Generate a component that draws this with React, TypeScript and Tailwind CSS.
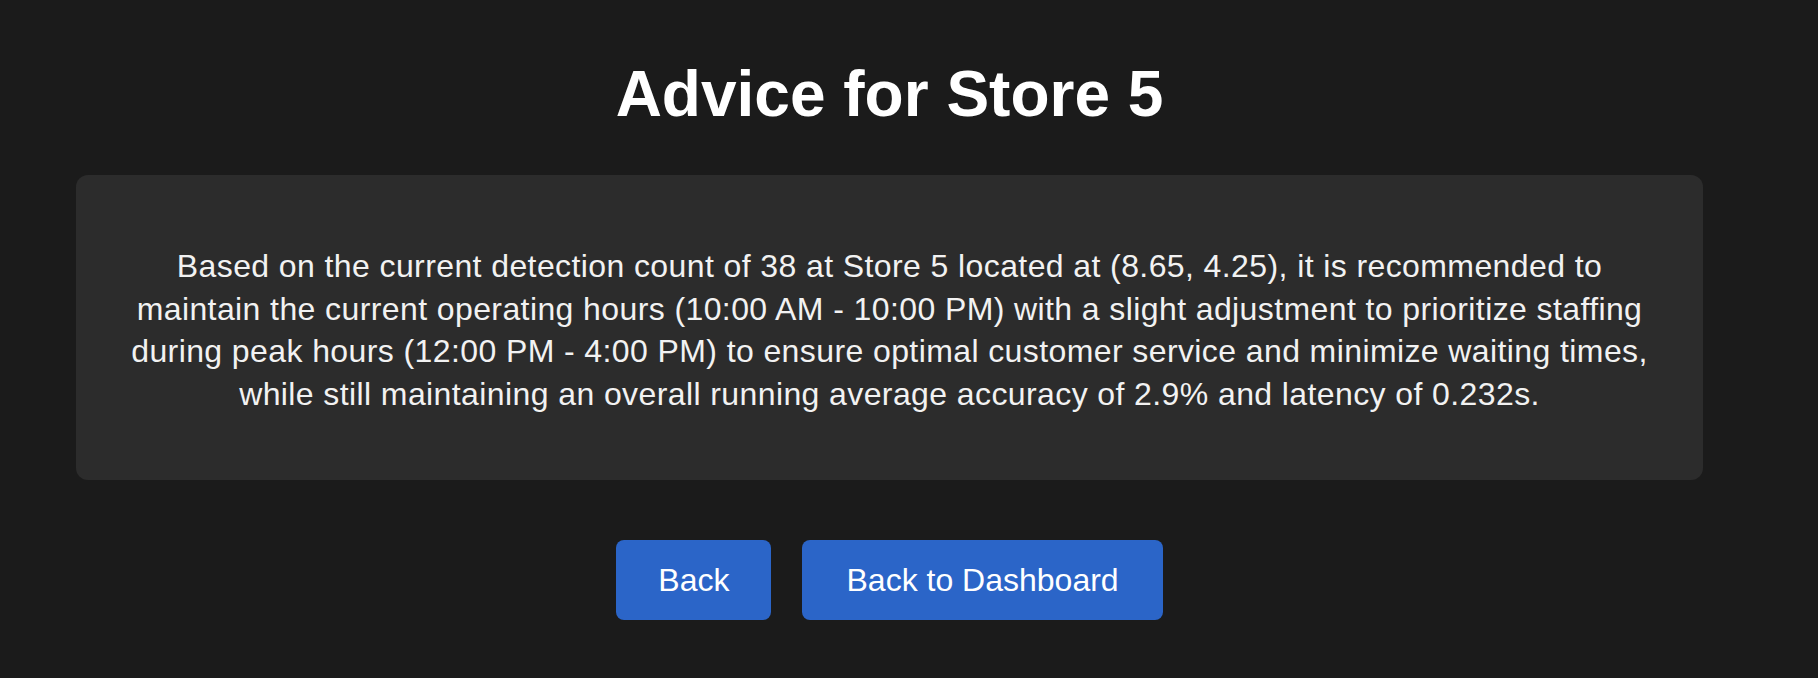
export default function App() {
  return (
    <div className="min-h-screen w-full bg-[#1b1b1b] font-['Liberation_Sans',Arial,sans-serif] text-white">
      <div className="w-[1779px] flex flex-col items-center pt-[57px]">
        <h1 className="text-[64px] font-bold leading-[74px]">Advice for Store 5</h1>

        <div className="mt-[44px] w-[1627px] h-[305px] rounded-xl bg-[#2c2c2c] px-[48px] pt-[70px]">
          <p className="text-center text-[32px] leading-[42.5px] tracking-[0.4px] text-[#f2f2f2]">
            Based on the current detection count of 38 at Store 5 located at (8.65, 4.25), it is recommended to
            maintain the current operating hours (10:00 AM - 10:00 PM) with a slight adjustment to prioritize staffing
            during peak hours (12:00 PM - 4:00 PM) to ensure optimal customer service and minimize waiting times,
            while still maintaining an overall running average accuracy of 2.9% and latency of 0.232s.
          </p>
        </div>

        <div className="mt-[60px] flex gap-[31px]">
          <button
            type="button"
            className="h-[80px] px-[42px] rounded-lg bg-[#2b65c8] text-[32px] text-white cursor-pointer"
          >
            Back
          </button>
          <button
            type="button"
            className="h-[80px] px-[44px] rounded-lg bg-[#2b65c8] text-[32px] text-white cursor-pointer"
          >
            Back to Dashboard
          </button>
        </div>
      </div>
    </div>
  );
}
